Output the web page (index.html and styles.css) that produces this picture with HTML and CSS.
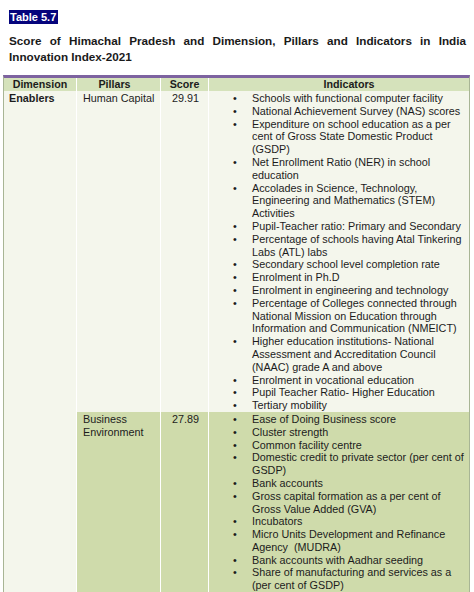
FILE: index.html
```html
<!DOCTYPE html>
<html>
<head>
<meta charset="utf-8">
<link rel="stylesheet" href="styles.css">
</head>
<body>
<div class="page">
  <div class="label-row"><span class="label">Table 5.7</span></div>
  <h1 class="title">Score of Himachal Pradesh and Dimension, Pillars and Indicators in India Innovation Index-2021</h1>
  <table class="idx">
    <colgroup>
      <col class="c-dim">
      <col class="c-pil">
      <col class="c-sco">
      <col class="c-ind">
    </colgroup>
    <thead>
      <tr>
        <th>Dimension</th>
        <th class="th-pil">Pillars</th>
        <th>Score</th>
        <th class="th-ind">Indicators</th>
      </tr>
    </thead>
    <tbody>
      <tr class="row-light">
        <td class="dim" rowspan="2">Enablers</td>
        <td class="pil">Human Capital</td>
        <td class="score">29.91</td>
        <td class="ind">
          <ul>
            <li>Schools with functional computer facility</li>
            <li>National Achievement Survey (NAS) scores</li>
            <li>Expenditure on school education as a per<br>cent of Gross State Domestic Product<br>(GSDP)</li>
            <li>Net Enrollment Ratio (NER) in school<br>education</li>
            <li>Accolades in Science, Technology,<br>Engineering and Mathematics (STEM)<br>Activities</li>
            <li>Pupil-Teacher ratio: Primary and Secondary</li>
            <li>Percentage of schools having Atal Tinkering<br>Labs (ATL) labs</li>
            <li>Secondary school level completion rate</li>
            <li>Enrolment in Ph.D</li>
            <li>Enrolment in engineering and technology</li>
            <li>Percentage of Colleges connected through<br>National Mission on Education through<br>Information and Communication (NMEICT)</li>
            <li>Higher education institutions- National<br>Assessment and Accreditation Council<br>(NAAC) grade A and above</li>
            <li>Enrolment in vocational education</li>
            <li>Pupil Teacher Ratio- Higher Education</li>
            <li>Tertiary mobility</li>
          </ul>
        </td>
      </tr>
      <tr class="row-green">
        <td class="pil">Business<br>Environment</td>
        <td class="score">27.89</td>
        <td class="ind">
          <ul>
            <li>Ease of Doing Business score</li>
            <li>Cluster strength</li>
            <li>Common facility centre</li>
            <li>Domestic credit to private sector (per cent of<br>GSDP)</li>
            <li>Bank accounts</li>
            <li>Gross capital formation as a per cent of<br>Gross Value Added (GVA)</li>
            <li>Incubators</li>
            <li>Micro Units Development and Refinance<br>Agency&nbsp; (MUDRA)</li>
            <li>Bank accounts with Aadhar seeding</li>
            <li>Share of manufacturing and services as a<br>(per cent of GSDP)</li>
          </ul>
        </td>
      </tr>
    </tbody>
  </table>
</div>
</body>
</html>
```

FILE: styles.css
```css
html, body {
  margin: 0;
  padding: 0;
  background: #ffffff;
}

body {
  font-family: "Liberation Sans", Arial, sans-serif;
  color: #1c1c1c;
}

.page {
  padding: 7px 0 0 0;
}

.label-row {
  padding-left: 9px;
  height: 14px;
}

.label {
  display: inline-block;
  background: #05047c;
  color: #ffffff;
  font-weight: bold;
  font-size: 11px;
  line-height: 14px;
  padding: 0 2px 0 1px;
}

.title {
  margin: 12px 0 0 9px;
  width: 457px;
  font-size: 11.7px;
  line-height: 15.5px;
  font-weight: bold;
  text-align: justify;
  color: #1a1a1a;
}

.idx {
  margin: 11px 0 0 3px;
  width: 467px;
  border-collapse: separate;
  border-spacing: 0;
  border-top: 3px solid #7d63a0;
  border-left: 1px solid #a8b595;
  border-right: 1px solid #a8b595;
  border-bottom: 1px solid #ffffff;
  table-layout: fixed;
  font-size: 10.8px;
  line-height: 12.8px;
}

.c-dim { width: 73px; }
.c-pil { width: 84px; }
.c-sco { width: 48px; }
.c-ind { width: auto; }

.idx th, .idx td {
  border-right: 1.5px solid #ffffff;
  padding: 0;
  vertical-align: top;
}

.idx th:last-child, .idx td.ind {
  border-right: none;
}

.idx th {
  background: #d5e2bb;
  font-size: 10.7px;
  font-weight: bold;
  text-align: center;
  height: 13px;
  line-height: 13px;
}

.idx .th-pil {
  padding-right: 8px;
}

.idx .th-ind {
  padding-left: 20px;
}

.row-light td {
  background: #f4f6ec;
}

.row-green td {
  background: #cfdbab;
}

.idx td.dim {
  background: #f4f6ec;
  font-weight: bold;
  padding: 1px 0 0 5px;
}

.idx td.pil {
  padding: 1px 0 0 6px;
}

.idx td.score {
  text-align: center;
  padding-top: 1px;
  padding-left: 2px;
}

.idx td.ind {
  padding: 1px 0 0 24px;
}

.ind ul {
  margin: 0;
  padding: 0;
  list-style: none;
}

.ind li {
  display: flex;
  white-space: nowrap;
}

.ind li::before {
  content: "\2022";
  flex: 0 0 19px;
}
```
